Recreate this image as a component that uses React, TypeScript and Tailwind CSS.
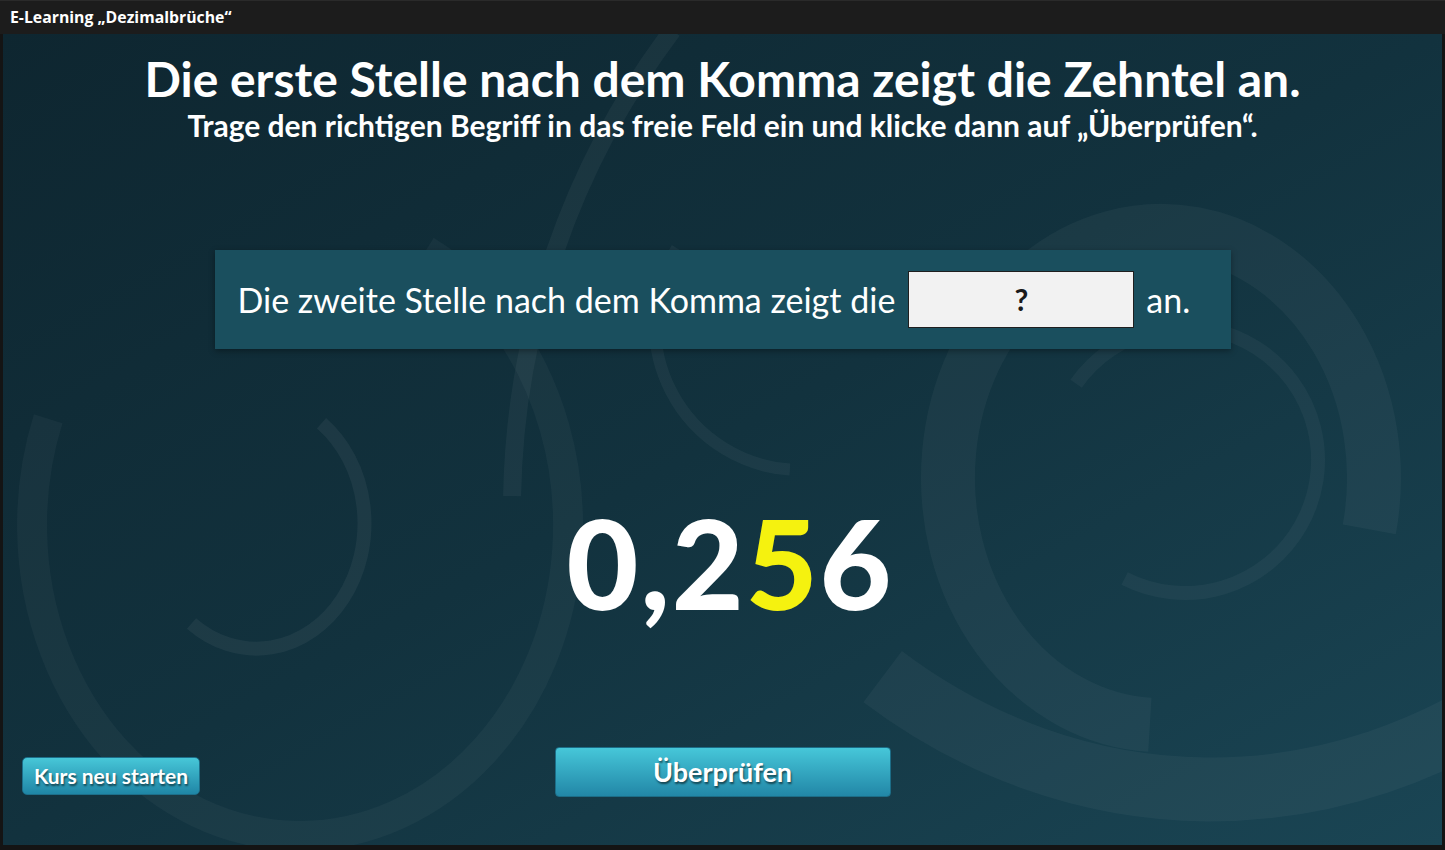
import React from 'react';

const rad = (a: number) => (a * Math.PI) / 180;

// elliptical arc path in page coordinates, angles in degrees
function arc(cx: number, cy: number, rx: number, ry: number, a0: number, a1: number) {
  const x0 = cx + rx * Math.cos(rad(a0));
  const y0 = cy + ry * Math.sin(rad(a0));
  const x1 = cx + rx * Math.cos(rad(a1));
  const y1 = cy + ry * Math.sin(rad(a1));
  const large = Math.abs(a1 - a0) > 180 ? 1 : 0;
  const sweep = a1 > a0 ? 1 : 0;
  return `M ${x0.toFixed(1)} ${y0.toFixed(1)} A ${rx} ${ry} 0 ${large} ${sweep} ${x1.toFixed(1)} ${y1.toFixed(1)}`;
}

const K = 1.16;

function Decor() {
  return (
    <svg className="absolute inset-0 w-full h-full pointer-events-none" viewBox="3 34 1439 811" preserveAspectRatio="none">
      <g fill="none" stroke="#ffffff">
        {/* big faint circle on the left */}
        <path d={arc(300, 525, 268, 268 * K, -62, 200)} strokeWidth="30" strokeOpacity="0.035" />
        {/* small arc on the left */}
        <path d={arc(255, 522, 108, 108 * K, -52, 126)} strokeWidth="14" strokeOpacity="0.05" />
        {/* long sweep through the middle */}
        <path d={arc(1309, 510, 797, 797, -143, -179)} strokeWidth="18" strokeOpacity="0.045" />
        {/* arc behind the prompt box */}
        <path d={arc(800, 325, 145, 145, -148, -266)} strokeWidth="12" strokeOpacity="0.045" />
        {/* thick ring on the right */}
        <path d={arc(1161, 478, 213, 213 * K, 12, -267)} strokeWidth="54" strokeOpacity="0.04" />
        {/* thin inner ring */}
        <path d={arc(1185, 460, 133, 133, -145, 117)} strokeWidth="14" strokeOpacity="0.04" />
        {/* wide band at the bottom right */}
        <path d={arc(1211, 90, 603, 603 * K, 123, 58)} strokeWidth="64" strokeOpacity="0.04" />
      </g>
    </svg>
  );
}

export default function App() {
  return (
    <div className="w-[1445px] h-[850px] bg-[#141414] flex flex-col overflow-hidden" style={{ fontFamily: 'Lato, "Open Sans", sans-serif' }}>
      {/* Title bar */}
      <div className="h-[34px] shrink-0 bg-[#1c1c1c] border-t border-[#2a2a2a] flex items-center px-[10px]">
        <span className="text-white text-[15.8px] font-bold" style={{ fontFamily: '"Open Sans", sans-serif' }}>
          E-Learning „Dezimalbrüche“
        </span>
      </div>

      {/* Stage */}
      <div className="relative flex-1 mx-[3px] mb-[5px] bg-gradient-to-br from-[#0e2630] via-[#12323e] to-[#1a4554] overflow-hidden">
        <Decor />
        <div className="relative h-full flex flex-col items-center">
          <h1 className="mt-[16px] text-white font-bold text-[48px] leading-[58px]">
            Die erste Stelle nach dem Komma zeigt die Zehntel an.
          </h1>
          <p className="text-white font-bold text-[30px] leading-[34px]">
            Trage den richtigen Begriff in das freie Feld ein und klicke dann auf „Überprüfen“.
          </p>

          <div className="mt-[108px] w-[1016px] h-[99px] bg-[#1a4f5e] shadow-[0_2px_6px_rgba(0,0,0,0.35)] flex items-center pl-[23px]">
            <span className="text-white text-[34px]">Die zweite Stelle nach dem Komma zeigt die</span>
            <div className="ml-[13px] w-[226px] h-[57px] bg-[#f2f2f2] border border-[#1f1f1f] flex items-center justify-center">
              <span className="text-[#1a1a1a] font-bold text-[30px]">?</span>
            </div>
            <span className="ml-[12px] text-white text-[34px]">an.</span>
          </div>

          <div className="mt-[153px] ml-[15px] text-white font-black text-[124px] leading-[120px] tracking-[2px]">
            0,2<span className="text-[#f5f20f]">5</span>6
          </div>

          <div className="mt-auto mb-[48px] w-full grid grid-cols-[1fr_auto_1fr] items-center px-[19px]">
            <div>
              <button className="w-[178px] h-[38px] rounded-[5px] bg-gradient-to-b from-[#47c7d8] to-[#1f86a6] border border-[#1d6f8a] text-white font-bold text-[21px] [text-shadow:1px_2px_2px_rgba(0,0,0,0.55)] mt-[8px]">
                Kurs neu starten
              </button>
            </div>
            <button className="w-[336px] h-[50px] rounded-[4px] bg-gradient-to-b from-[#46c7d9] to-[#2287a7] border border-[#1c6d87] text-white font-bold text-[27px] [text-shadow:1px_2px_2px_rgba(0,0,0,0.55)]">
              Überprüfen
            </button>
            <div />
          </div>
        </div>
      </div>
    </div>
  );
}
